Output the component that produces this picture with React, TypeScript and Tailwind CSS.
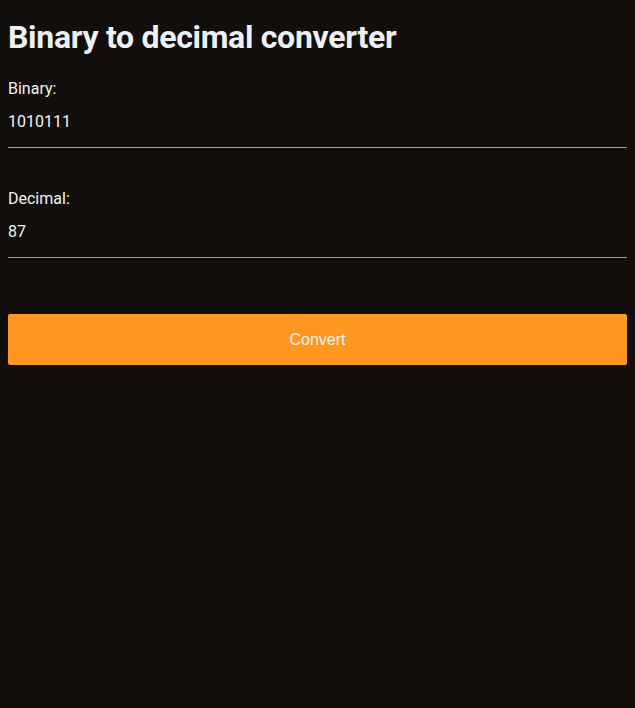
import { useState } from "react";

export default function App() {
  const [binary, setBinary] = useState("1010111");
  const [decimal, setDecimal] = useState("87");

  const convert = () => {
    if (/^[01]+$/.test(binary)) setDecimal(String(parseInt(binary, 2)));
  };

  return (
    <div className="min-h-[708px] bg-[#110e0c] px-2 pt-[19px] font-['Roboto',sans-serif] text-[#f1f1f1]">
      <h1 className="text-[32px] font-bold leading-[37px] tracking-[-0.3px] text-[#eef0f6]">
        Binary to decimal converter
      </h1>

      <div className="mt-[23px] flex flex-col">
        <label className="text-base leading-[19px]">Binary:</label>
        <input
          value={binary}
          onChange={(e) => setBinary(e.target.value)}
          className="mt-[14px] border-b border-[#d0983f] bg-transparent pb-[16px] text-base leading-[19px] outline-none"
        />
      </div>

      <div className="mt-[41px] flex flex-col">
        <label className="text-base leading-[19px]">Decimal:</label>
        <input
          value={decimal}
          readOnly
          className="mt-[14px] border-b border-[#d0983f] bg-transparent pb-[16px] text-base leading-[19px] outline-none"
        />
      </div>

      <button
        onClick={convert}
        className="mt-[56px] h-[51px] w-full rounded-[2px] bg-[#ff9721] font-['Liberation_Sans',sans-serif] text-base text-[#f4f1ee]"
      >
        Convert
      </button>
    </div>
  );
}
